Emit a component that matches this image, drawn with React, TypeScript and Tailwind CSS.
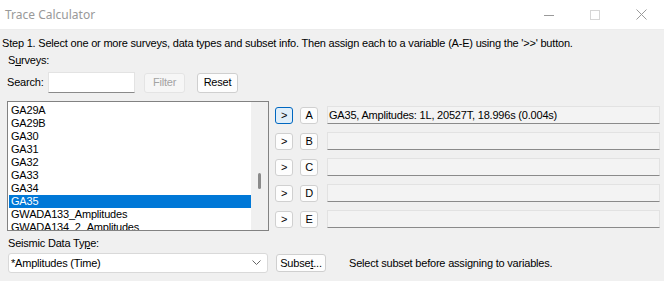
import React from "react";

const items = [
  "GA29A",
  "GA29B",
  "GA30",
  "GA31",
  "GA32",
  "GA33",
  "GA34",
  "GA35",
  "GWADA133_Amplitudes",
  "GWADA134_2_Amplitudes",
];

const rows = [
  { l: "A", v: "GA35, Amplitudes: 1L, 20527T, 18.996s (0.004s)", active: true },
  { l: "B", v: "", active: false },
  { l: "C", v: "", active: false },
  { l: "D", v: "", active: false },
  { l: "E", v: "", active: false },
];

export default function App() {
  return (
    <div
      className="w-[664px] h-[281px] overflow-hidden bg-[#f0f0f0] text-[11px] leading-[13px] tracking-[-0.2px] text-black"
      style={{ fontFamily: '"Liberation Sans", Arial, sans-serif' }}
    >
      {/* Title bar */}
      <div className="h-[30px] bg-white border-b border-[#ececec] flex items-center">
        <div
          className="pl-[5px] text-[12px] tracking-normal text-[#999999] flex-1"
          style={{ fontFamily: '"Noto Sans", "Open Sans", sans-serif' }}
        >
          Trace Calculator
        </div>
        <div className="flex items-center h-full">
          <div className="w-[46px] h-full flex items-center justify-center">
            <svg width="10" height="10" viewBox="0 0 10 10">
              <line x1="0" y1="5.5" x2="10" y2="5.5" stroke="#9a9a9a" strokeWidth="1" />
            </svg>
          </div>
          <div className="w-[46px] h-full flex items-center justify-center">
            <svg width="10" height="10" viewBox="0 0 10 10">
              <rect x="0.5" y="0.5" width="9" height="9" fill="none" stroke="#d6d6d6" strokeWidth="1" />
            </svg>
          </div>
          <div className="w-[46px] h-full flex items-center justify-center">
            <svg width="11" height="11" viewBox="0 0 11 11">
              <path d="M0.5 0.5 L10.5 10.5 M10.5 0.5 L0.5 10.5" stroke="#9a9a9a" strokeWidth="1" />
            </svg>
          </div>
        </div>
      </div>

      {/* Body */}
      <div className="pt-[7px]">
        <div className="pl-[2px] whitespace-nowrap">
          Step 1. Select one or more surveys, data types and subset info. Then assign each to a variable (A-E) using the '&gt;&gt;' button.
        </div>
        <div className="pl-[8px] mt-[4px]">
          S<span className="underline">u</span>rveys:
        </div>
        <div className="flex items-center mt-[5px] h-[21px]">
          <div className="pl-[7px] w-[48px]">Search:</div>
          <div className="w-[87px] h-[21px] bg-white border border-[#e3e3e3] border-b-[#8a8a8a]" />
          <div className="ml-[9px] w-[41px] h-[20px] rounded-[3px] border border-[#e4e4e4] bg-[#f6f6f6] text-[#a3a3a3] flex items-center justify-center">
            Filter
          </div>
          <div className="ml-[12px] w-[41px] h-[20px] rounded-[3px] border border-[#cfcfcf] bg-[#fdfdfd] flex items-center justify-center">
            Reset
          </div>
        </div>

        {/* Main */}
        <div className="flex mt-[8px]">
          <div className="ml-[7px] w-[262px] h-[130px] border border-[#828282] bg-white flex overflow-hidden">
            <div className="flex-1 pt-[2px] pl-[1px]">
              {items.map((it, i) => (
                <div
                  key={it}
                  className={
                    "h-[13px] pl-[2px] leading-[13px] whitespace-nowrap " +
                    (i === 7 ? "bg-[#0078d7] text-white" : "")
                  }
                >
                  {it}
                </div>
              ))}
            </div>
            <div className="w-[17px] h-full bg-[#f0f0f0] relative">
              <div className="absolute left-[7px] top-[71px] w-[3px] h-[16px] rounded-full bg-[#8a8a8a]" />
            </div>
          </div>
          <div className="flex flex-col gap-[8px] pt-[5px] pl-[6px]">
            {rows.map((r) => (
              <div key={r.l} className="flex items-center h-[18px]">
                <div
                  className={
                    "w-[18px] h-[17px] rounded-[3px] border flex items-center justify-center " +
                    (r.active ? "border-[#0067c0] bg-[#e0eef9]" : "border-[#d0d0d0] bg-[#fdfdfd]")
                  }
                >
                  &gt;
                </div>
                <div className="ml-[7px] w-[18px] h-[17px] rounded-[3px] border border-[#d0d0d0] bg-[#fdfdfd] flex items-center justify-center">
                  {r.l}
                </div>
                <div className="ml-[9px] w-[333px] h-[18px] bg-[#f3f3f3] border border-[#e2e2e2] border-b-[#8a8a8a] pl-[1px] flex items-center whitespace-nowrap">
                  {r.v}
                </div>
              </div>
            ))}
          </div>
        </div>

        {/* Bottom */}
        <div className="pl-[8px] mt-[6px]">
          Seismic Data Ty<span className="underline">p</span>e:
        </div>
        <div className="flex items-center mt-[3px]">
          <div className="ml-[8px] w-[260px] h-[20px] bg-white border border-[#d9d9d9] rounded-[3px] flex items-center pl-[2px] pr-[6px]">
            <div className="flex-1">*Amplitudes (Time)</div>
            <svg width="9" height="6" viewBox="0 0 9 6">
              <path d="M0.5 0.5 L4.5 4.5 L8.5 0.5" fill="none" stroke="#666" strokeWidth="1" />
            </svg>
          </div>
          <div className="ml-[8px] w-[50px] h-[18px] rounded-[3px] border border-[#cfcfcf] bg-[#fdfdfd] flex items-center justify-center">
            Subse<span className="underline">t</span>...
          </div>
          <div className="ml-[23px]">Select subset before assigning to variables.</div>
        </div>
      </div>
    </div>
  );
}
